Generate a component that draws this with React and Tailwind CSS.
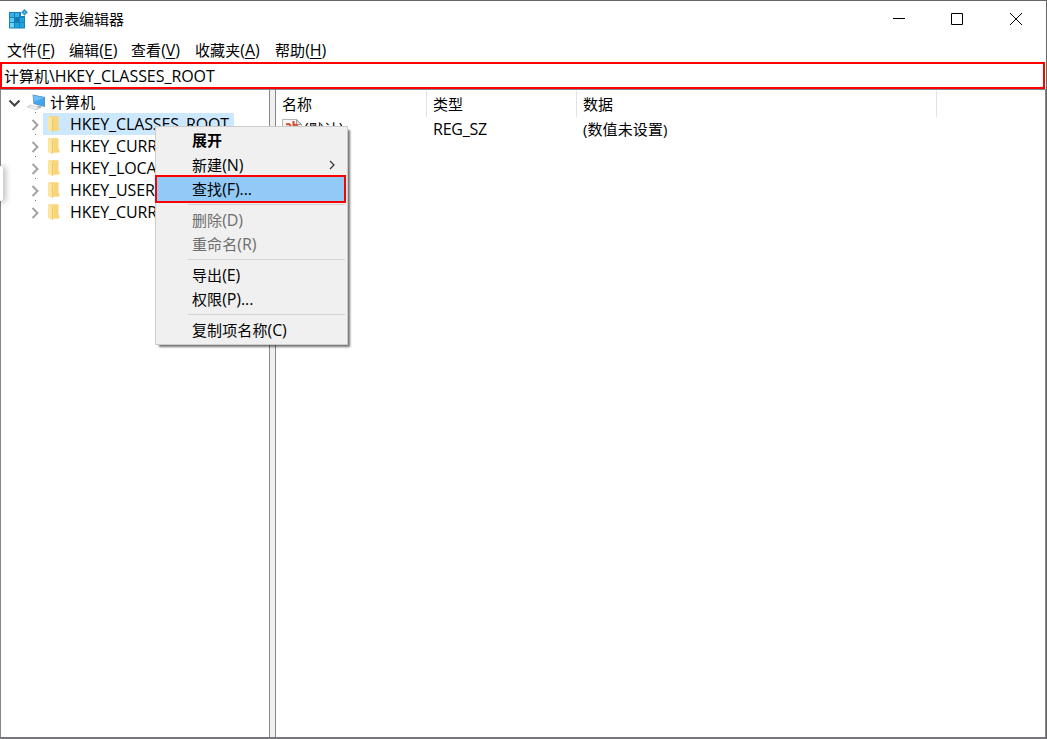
import React from 'react';

const FolderIcon = () => (
  <svg width="14" height="18" viewBox="0 0 14 18" className="shrink-0">
    <path d="M1 1.200 5 3.500v13.500L1 15z" fill="#fde59b" />
    <path d="M5 3.500 6.500 3v13l-1.500 1z" fill="#f1c75c" />
    <path d="M1 1.200h10.500V12l1 .500V15.500l-6 .300V3L5 3.500z" fill="#f7d57a" />
  </svg>
);

const RegistryIcon = () => (
  <svg width="20" height="20" viewBox="0 0 20 20" className="shrink-0">
    <path d="M1 3h12v4h4v12.500H1z" fill="#1583b8" />
    <path d="M2 4h4v4H2zM7 4h4v4H7z" fill="#35b4ea" />
    <path d="M2 9h4v4H2z" fill="#5dcdf7" />
    <path d="M7 9h4v4H7z" fill="#1479ae" />
    <path d="M12 9h4v4h-4zM7 14h4v4.500H7zM12 14h4v4.500h-4z" fill="#20a4df" />
    <path d="M2 14h4v4.500H2z" fill="#6bd3fa" />
    <path d="m16.500 0 3.300 3.300-3.300 3.500-3.300-3.500z" fill="#2e8fbe" />
    <path d="m16.500 1.800 1.500 1.500-1.500 1.700L15 3.300z" fill="#55b9e6" />
  </svg>
);

const ComputerIcon = () => (
  <svg width="20" height="18" viewBox="0 0 20 18" className="ml-[7px] shrink-0">
    <path d="M5.500 1.500 18 4v10L6.500 11z" fill="#5d8fb8" />
    <path d="M6.300 2.400 17 4.700v8.300L7.200 10.200z" fill="#42a5ee" />
    <path d="M6.300 2.400 17 4.700 7.100 8.500z" fill="#6fc0f7" />
    <path d="m11 12.500 4 1.200-1.500 1.500-4-1z" fill="#a7b1ba" />
    <path d="m-.5 14 4-2.500 10 3.500-4 2.300z" fill="#c6ccd2" />
    <path d="m1.500 14 2.500-1.500 7 2.300-2.500 1.500z" fill="#eef1f4" />
  </svg>
);

const StringIcon = () => (
  <svg width="20" height="20" viewBox="0 0 20 20" className="shrink-0">
    <path d="M.5.5h14l5 5v14H.5z" fill="#f7f7f7" stroke="#b5b5b5" />
    <path d="M14.500.5v5h5z" fill="#ddd" stroke="#999" />
    <path d="M4 5.500q4.500-1.500 4.500 2v4M8 8q-4 0-4 2t4 1M11.500 2v9q4 1 4-2.500T11.500 6" fill="none" stroke="#d84d2b" strokeWidth="2" />
  </svg>
);

const menus = [
  ['文件', 'F', 'w-[62px]'],
  ['编辑', 'E', 'w-[62px]'],
  ['查看', 'V', 'w-[64px]'],
  ['收藏夹', 'A', 'w-[80px]'],
  ['帮助', 'H', 'w-[62px]'],
];

const keys = [
  'HKEY_CLASSES_ROOT',
  'HKEY_CURRENT_USER',
  'HKEY_LOCAL_MACHINE',
  'HKEY_USERS',
  'HKEY_CURRENT_CONFIG',
];

const Latin = ({ children }) => <span className="text-[16px] leading-5 tracking-[-0.1px]">{children}</span>;

const TreeRow = ({ name, selected }) => (
  <div className="relative flex h-[22px] items-center pl-[29px]">
    <div className="absolute left-[34px] -top-px h-px w-px bg-[#777]" />
    <svg width="10" height="12" viewBox="0 0 10 12" className="mt-[2px] shrink-0" fill="none" stroke="#a3a3a3" strokeWidth="2">
      <path d="m2.500 1 5 5-5 5" />
    </svg>
    <div className={`ml-[3px] flex h-[22px] w-[191px] items-center pl-1 ${selected ? 'bg-[#cce8ff]' : ''}`}>
      <FolderIcon />
      <span className="ml-[9px] text-[16px] leading-5 tracking-[-0.1px]">{name}</span>
    </div>
  </div>
);

const MenuItem = ({ children, className = '' }) => (
  <div className={`flex h-6 items-center pl-9 ${className}`}>{children}</div>
);

const Separator = () => (
  <div className="flex h-[7px] items-center pl-8 pr-[2px]">
    <div className="h-px w-full bg-[#d4d4d4]" />
  </div>
);

const HeaderCell = ({ children, className }) => (
  <div className={`flex h-[26px] items-center border-r border-[#e2e2e2] pl-[6px] ${className}`}>{children}</div>
);

export default function App() {
  return (
    <div className="relative flex h-[739px] w-[1047px] flex-col overflow-hidden whitespace-nowrap border-r border-t border-[#666] bg-white font-['Open_Sans','Noto_Sans_CJK_SC',sans-serif] text-[15px] leading-[22px] tracking-[0.1px] text-black">
      <header className="flex h-9 shrink-0 items-center pl-2">
        <RegistryIcon />
        <span className="ml-[6px] tracking-normal">注册表编辑器</span>
        <svg width="130" height="14" viewBox="0 0 130 14" className="ml-auto mr-[23px]" fill="none" stroke="#000">
          <path d="M0 6.500h12M58.500 1.500h11v11h-11z" />
          <path d="m117 1 12 12m0-12-12 12" />
        </svg>
      </header>
      <nav className="flex h-[25px] shrink-0 items-center pl-[7px]">
        {menus.map(([label, key, width]) => (
          <span key={key} className={width}>
            {label}<Latin>(<span className="underline underline-offset-2">{key}</span>)</Latin>
          </span>
        ))}
      </nav>
      <div className="flex h-[27px] w-[1045px] shrink-0 items-center border-2 border-[#f00] pl-[2px]">
        <span className="tracking-normal">计算机</span>
        <span className="text-[16px] leading-5 tracking-[-0.05px]">\HKEY_CLASSES_ROOT</span>
      </div>
      <main className="flex w-[1046px] grow border-b-2 border-t border-[#77777c] border-t-[#828790]">
        <aside className="w-[270px] shrink-0 border-x border-[#828790] pt-px">
          <div className="flex h-[22px] items-center pl-[7px]">
            <svg width="12" height="12" viewBox="0 0 12 12" className="mt-px shrink-0" fill="none" stroke="#404040" strokeWidth="2">
              <path d="m1.500 3.500 5 5 5-5" />
            </svg>
            <ComputerIcon />
            <span className="ml-[3px]">计算机</span>
          </div>
          {keys.map((name, i) => (
            <TreeRow key={name} name={name} selected={i === 0} />
          ))}
        </aside>
        <div className="w-[5px] shrink-0 bg-[#f0f0f0]" />
        <section className="grow border-x border-[#828790]">
          <div className="flex pt-px">
            <HeaderCell className="w-[151px]">名称</HeaderCell>
            <HeaderCell className="w-[150px]">类型</HeaderCell>
            <HeaderCell className="w-[360px]">数据</HeaderCell>
          </div>
          <div className="flex h-6 items-center">
            <div className="flex w-[151px] items-center pl-[6px]">
              <StringIcon />
              <span className="ml-[2px]"><Latin>(</Latin>默认<Latin>)</Latin></span>
            </div>
            <div className="w-[150px] pl-[6px] text-[16px] leading-[22px] tracking-[-0.25px]">REG_SZ</div>
            <div className="pl-[6px]">(数值未设置)</div>
          </div>
        </section>
      </main>

      <div className="absolute left-0 top-[165px] h-[35px] w-[3px] rounded-r bg-white shadow-[1px_1px_6px_1px_rgba(0,0,0,0.35)]" />

      <div className="absolute left-[155px] top-[125px] w-[193px] border border-[#ccc] bg-[#f0f0f0] py-[2px] shadow-[3px_3px_2px_-1px_rgba(0,0,0,0.55)]">
        <MenuItem className="pb-[2px] font-bold">展开</MenuItem>
        <MenuItem className="pr-[11px]">
          <span>新建<Latin>(N)</Latin></span>
          <svg width="7" height="10" viewBox="0 0 7 10" className="ml-auto" fill="none" stroke="#333" strokeWidth="1.200">
            <path d="m1 1 4 4-4 4" />
          </svg>
        </MenuItem>
        <div className="relative -my-[2px] -ml-px flex h-7 w-[191px] items-center border-2 border-[#f00] bg-[#91c9f7] pl-[35px]">
          <span>查找<Latin>(F)...</Latin></span>
        </div>
        <Separator />
        <MenuItem className="text-[#6d6d6d]"><span>删除<Latin>(D)</Latin></span></MenuItem>
        <MenuItem className="text-[#6d6d6d]"><span>重命名<Latin>(R)</Latin></span></MenuItem>
        <Separator />
        <MenuItem><span>导出<Latin>(E)</Latin></span></MenuItem>
        <MenuItem><span>权限<Latin>(P)...</Latin></span></MenuItem>
        <Separator />
        <MenuItem><span>复制项名称<Latin>(C)</Latin></span></MenuItem>
      </div>
    </div>
  );
}
